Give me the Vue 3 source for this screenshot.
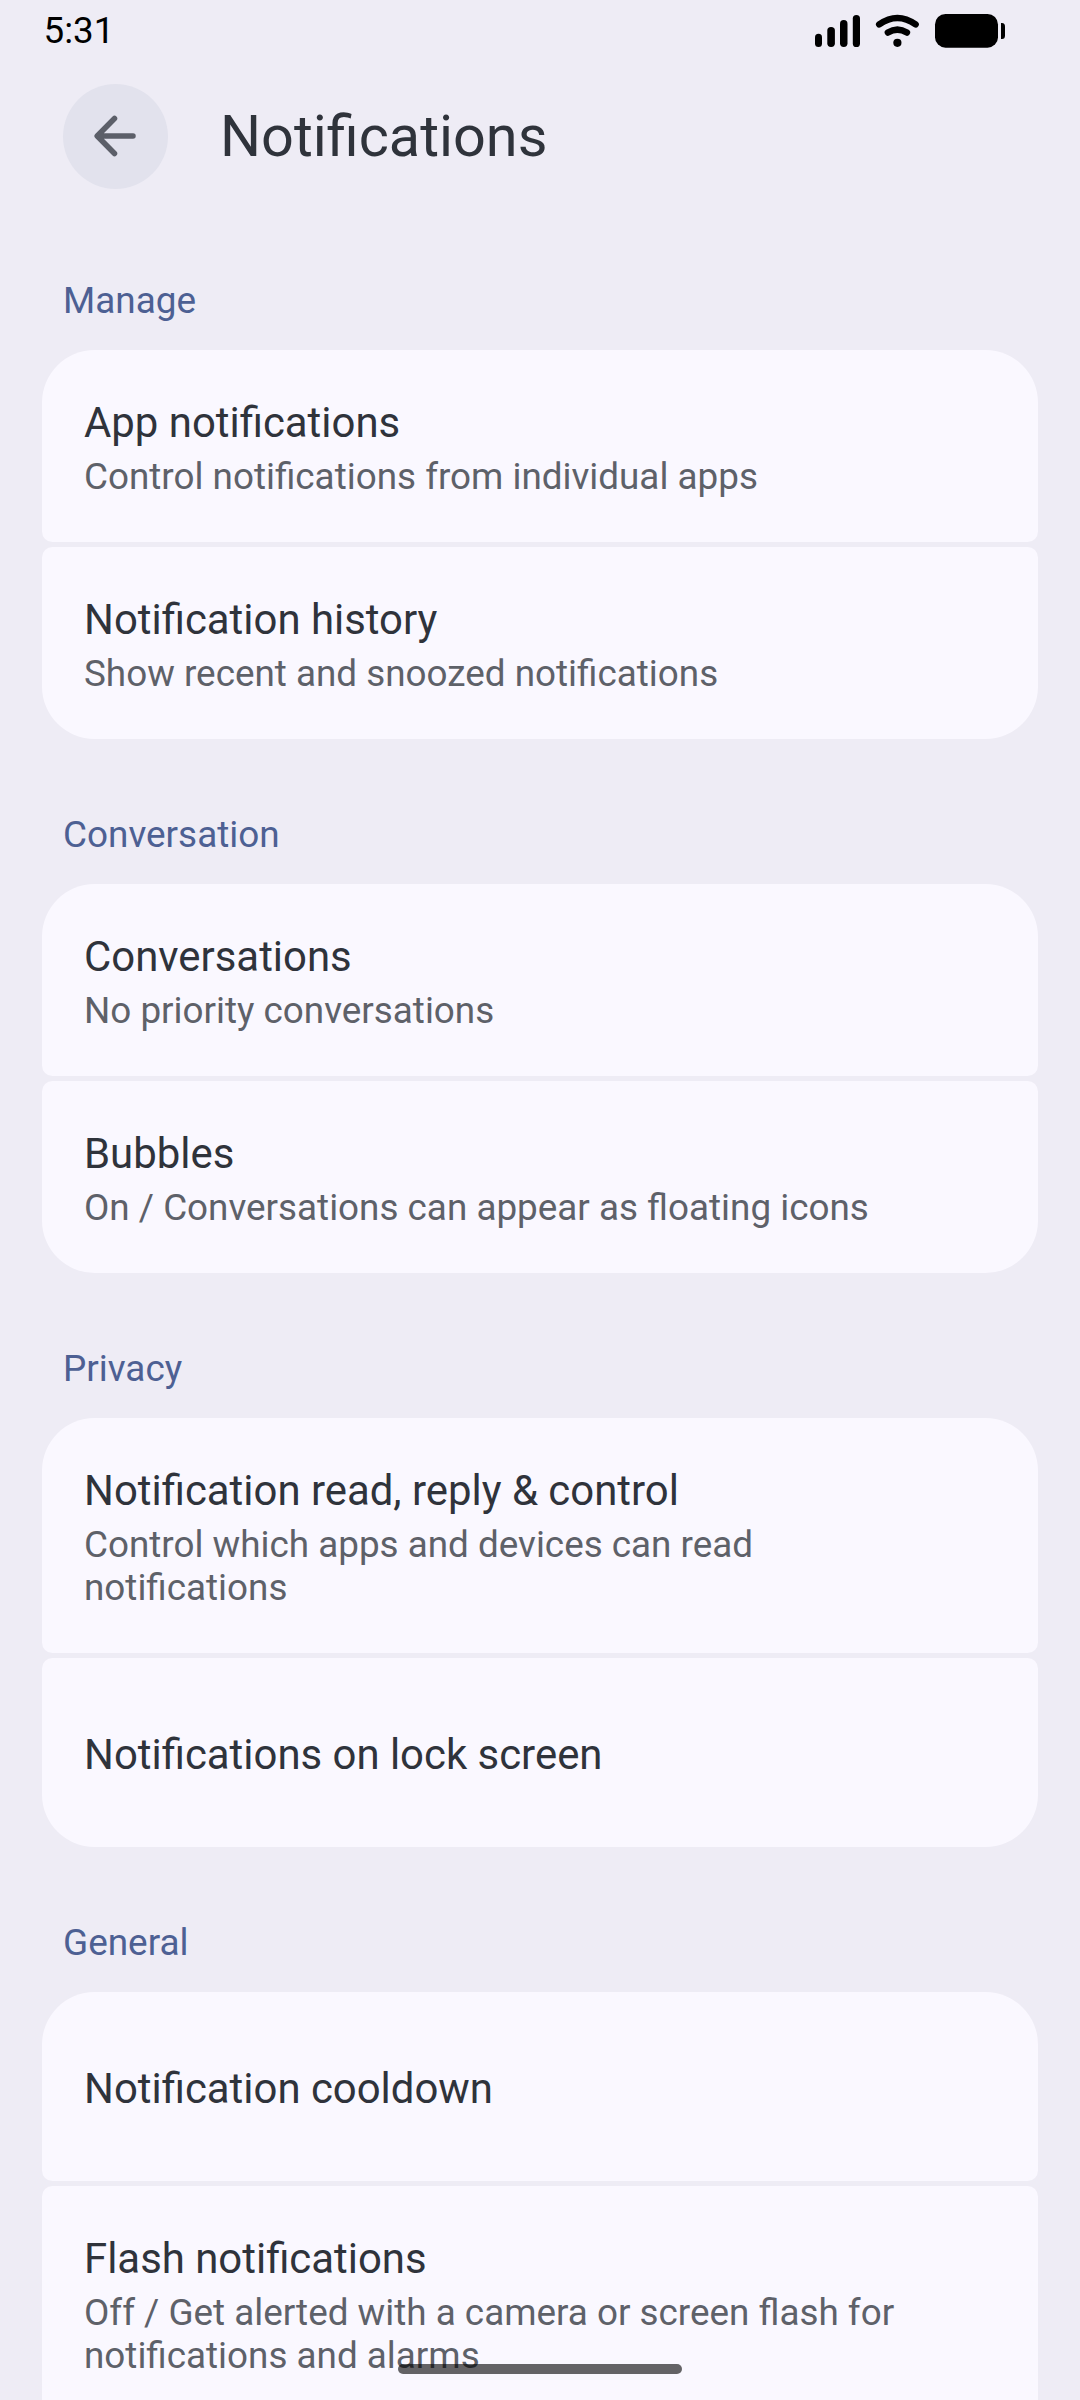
<script setup>
const sections = [
  {
    title: 'Manage',
    items: [
      { title: 'App notifications', summary: 'Control notifications from individual apps' },
      { title: 'Notification history', summary: 'Show recent and snoozed notifications' },
    ],
  },
  {
    title: 'Conversation',
    items: [
      { title: 'Conversations', summary: 'No priority conversations' },
      { title: 'Bubbles', summary: 'On / Conversations can appear as floating icons' },
    ],
  },
  {
    title: 'Privacy',
    items: [
      { title: 'Notification read, reply & control', summary: 'Control which apps and devices can read notifications' },
      { title: 'Notifications on lock screen' },
    ],
  },
  {
    title: 'General',
    continues: true,
    items: [
      { title: 'Notification cooldown' },
      { title: 'Flash notifications', summary: 'Off / Get alerted with a camera or screen flash for notifications and alarms' },
    ],
  },
]
</script>

<template>
  <div class="screen">
    <header class="status-bar">
      <span class="clock">5:31</span>
      <svg class="status-icons" width="192" height="36" viewBox="814 13 192 36">
        <rect x="815" y="33.7" width="7" height="13.3" rx="3.5" />
        <rect x="827.3" y="27" width="7.6" height="20" rx="3.7" />
        <rect x="840" y="20" width="7.5" height="27" rx="3.7" />
        <rect x="852.8" y="15" width="7.2" height="32" rx="3.6" />
        <path class="arc" d="M879.2 24.4Q897.4 11.5 915.6 24.4" />
        <path class="arc" d="M887.9 32.6Q897.4 26.6 906.9 32.6" />
        <circle cx="897.4" cy="42.8" r="4.1" />
        <rect x="935" y="14" width="63" height="33.7" rx="10.5" />
        <path d="M1001 23h1q3 0 3 3.5v9q0 3.5-3 3.5h-1z" />
      </svg>
    </header>

    <div class="app-bar">
      <button class="back" aria-label="Back">
        <svg width="105" height="105" viewBox="63 84 105 105">
          <path d="M133 136H98M114.500 118.500L97.200 136L114.500 153.500" />
        </svg>
      </button>
      <h1>Notifications</h1>
    </div>

    <main>
      <section v-for="section in sections" :key="section.title">
        <h2>{{ section.title }}</h2>
        <div class="group" :class="{ continues: section.continues }">
          <article v-for="item in section.items" :key="item.title" :class="{ single: !item.summary }">
            <h3>{{ item.title }}</h3>
            <p v-if="item.summary">{{ item.summary }}</p>
          </article>
        </div>
      </section>
    </main>

    <div class="nav-handle"></div>
  </div>
</template>

<style>
body {
  margin: 0;
  background: #eeecf5;
}
</style>

<style scoped>
.screen {
  position: relative;
  width: 1080px;
  height: 2400px;
  overflow: hidden;
  background: #eeecf5;
  font-family: Roboto, sans-serif;
}
.status-bar {
  display: flex;
  justify-content: space-between;
  height: 84px;
  padding: 0 74px 0 43.5px;
}
.clock {
  margin-top: 9px;
  font-size: 36.75px;
  line-height: 43px;
  color: #000;
}
.status-icons {
  margin-top: 13px;
}
.arc {
  fill: none;
  stroke: #000;
  stroke-width: 6.5;
  stroke-linecap: round;
}
.app-bar {
  display: flex;
  align-items: center;
  gap: 52px;
  height: 105px;
  padding-left: 63px;
}
.back {
  width: 105px;
  height: 105px;
  padding: 0;
  border: 0;
  border-radius: 50%;
  background: #e2e2ed;
}
.back svg {
  display: block;
  fill: none;
  stroke: #5c5f69;
  stroke-width: 5.5;
  stroke-linecap: round;
  stroke-linejoin: round;
}
h1,
h2,
h3,
p {
  margin: 0;
  font-weight: 400;
}
h1 {
  font-size: 57.6px;
  line-height: 68px;
  color: #2f333b;
}
main {
  padding: 16px 42px 0;
}
h2 {
  box-sizing: border-box;
  height: 145px;
  padding: 74px 21px 0;
  font-size: 36.9px;
  line-height: 43px;
  color: #4d6093;
}
.group {
  display: flex;
  flex-direction: column;
  gap: 5px;
}
article {
  box-sizing: border-box;
  padding: 48px 120px 44px 42px;
  border-radius: 10.5px;
  background: #faf8ff;
}
article:first-child {
  padding-right: 220px;
  border-top-left-radius: 52.5px;
  border-top-right-radius: 52.5px;
}
.group:not(.continues) article:last-child {
  border-bottom-left-radius: 52.5px;
  border-bottom-right-radius: 52.5px;
}
.continues article:last-child {
  height: 250px;
  border-radius: 10.5px 10.5px 0 0;
}
article.single {
  display: flex;
  align-items: center;
  height: 189px;
  padding: 4px 42px 0;
}
h3 {
  font-size: 41.9px;
  line-height: 50px;
  color: #2f333b;
}
p {
  margin-top: 7px;
  font-size: 36.85px;
  line-height: 43px;
  color: #5e6169;
}
.nav-handle {
  position: absolute;
  left: 398px;
  top: 2364px;
  width: 284px;
  height: 10px;
  border-radius: 5px;
  background: rgba(0, 0, 0, 0.6);
}
</style>
